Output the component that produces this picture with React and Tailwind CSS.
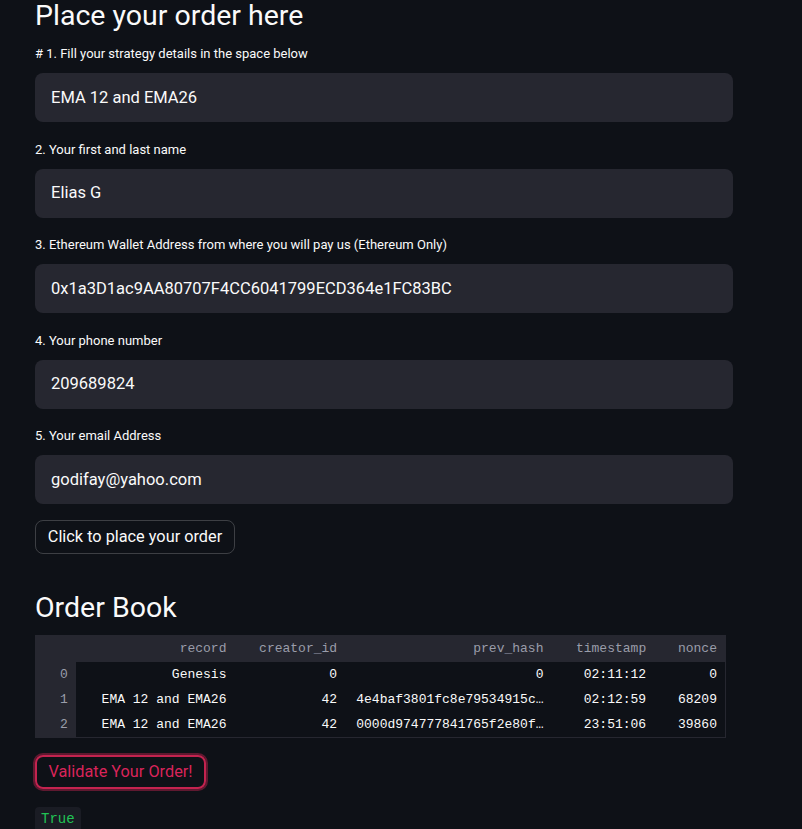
const fields = [
  { label: "# 1. Fill your strategy details in the space below", value: "EMA 12 and EMA26" },
  { label: "2. Your first and last name", value: "Elias G" },
  { label: "3. Ethereum Wallet Address from where you will pay us (Ethereum Only)", value: "0x1a3D1ac9AA80707F4CC6041799ECD364e1FC83BC" },
  { label: "4. Your phone number", value: "209689824" },
  { label: "5. Your email Address", value: "godifay@yahoo.com" },
];

const rows = [
  ["0", "Genesis", "0", "0", "02:11:12", "0"],
  ["1", "EMA 12 and EMA26", "42", "4e4baf3801fc8e79534915c…", "02:12:59", "68209"],
  ["2", "EMA 12 and EMA26", "42", "0000d974777841765f2e80f…", "23:51:06", "39860"],
];

const widths = ["w-[40px]", "w-[159px]", "w-[111px]", "w-[207px]", "w-[103px]", "w-[71px]"];

function Field({ label, value, first }) {
  return (
    <div className={first ? "mt-[11px]" : "mt-[17.5px]"}>
      <div className="h-[20px] text-[13px] leading-[20px] text-[#fafafa]">{label}</div>
      <div className="mt-[9px] h-[49px] w-[698px] rounded-lg bg-[#262730] px-4 pt-px flex items-center text-[16.5px] text-[#fafafa]">
        {value}
      </div>
    </div>
  );
}

export default function App() {
  return (
    <div className="h-[829px] overflow-hidden bg-[#0e1117] px-[35px] text-[#fafafa] font-['Roboto',sans-serif]">
      <h1 className="-mt-[2px] h-[35px] text-[28.5px] leading-[35px] font-normal">Place your order here</h1>

      {fields.map((f, i) => (
        <Field key={i} {...f} first={i === 0} />
      ))}

      <button className="mt-4 block h-[34px] w-[200px] rounded-lg border border-[#fafafa]/20 text-[16.3px] text-[#fafafa]">
        Click to place your order
      </button>

      <h2 className="mt-[36px] h-[36px] text-[28.5px] leading-[36px] font-normal">Order Book</h2>

      <div className="mt-[9px] w-[691px] border border-[#262730] font-['Liberation_Mono',monospace] text-[13px]">
        <div className="flex h-[26px] items-center bg-[#262730] text-[#9a9daa]">
          {["", "record", "creator_id", "prev_hash", "timestamp", "nonce"].map((h, i) => (
            <div key={i} className={`${widths[i]} pr-2 text-right`}>{h}</div>
          ))}
        </div>
        {rows.map((r, ri) => (
          <div key={ri} className="flex h-[25px] items-center">
            {r.map((c, i) => (
              <div
                key={i}
                className={`${widths[i]} flex h-full items-center justify-end pr-2 ${
                  i === 0 ? "bg-[#262730] text-[#9a9daa]" : "text-[#fafafa]"
                }`}
              >
                {c}
              </div>
            ))}
          </div>
        ))}
      </div>

      <button className="mt-[17px] block h-[34px] w-[171px] rounded-lg border-2 border-[#c4234f] text-[16.3px] text-[#d9245a] shadow-[0_0_0_2px_rgba(196,35,79,0.45)]">
        Validate Your Order!
      </button>

      <div className="mt-[18px] inline-block rounded bg-[#1a1c24] px-[6px] py-[2px] font-['Liberation_Mono',monospace] text-[14px] text-[#21c354]">
        True
      </div>
    </div>
  );
}
